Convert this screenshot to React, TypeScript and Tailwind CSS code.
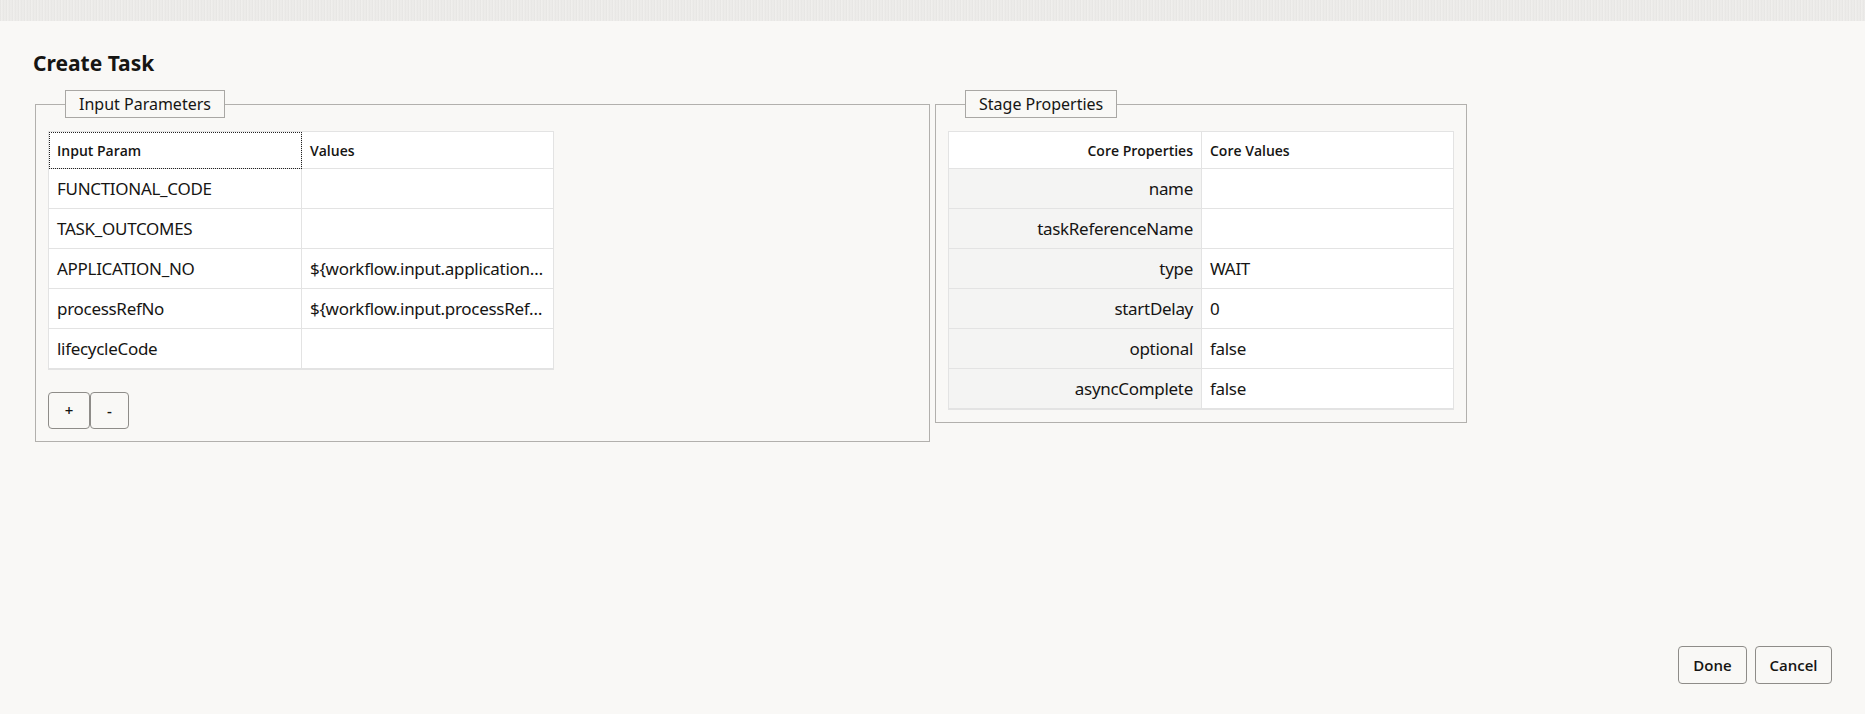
const inputParams = [
  { name: 'FUNCTIONAL_CODE', value: '' },
  { name: 'TASK_OUTCOMES', value: '' },
  { name: 'APPLICATION_NO', value: '${workflow.input.application…' },
  { name: 'processRefNo', value: '${workflow.input.processRef…' },
  { name: 'lifecycleCode', value: '' },
];

const coreProps = [
  { name: 'name', value: '' },
  { name: 'taskReferenceName', value: '' },
  { name: 'type', value: 'WAIT' },
  { name: 'startDelay', value: '0' },
  { name: 'optional', value: 'false' },
  { name: 'asyncComplete', value: 'false' },
];

const App = () => {
  return (
    <div className="w-full h-[714px] bg-[#f9f8f6] flex flex-col text-[#161513] font-['Noto_Sans',sans-serif]">
      {/* textured header strip */}
      <div className="h-[21px] bg-[#ebeae8] bg-[repeating-linear-gradient(90deg,#e4e3e1_0px,#f3f2f0_2px,#e6e5e3_3px,#efeeec_5px,#e9e8e6_6px)]" />

      <h1 className="pl-[33px] pt-[28px] text-[21px] leading-[28px] font-bold">Create Task</h1>

      <div className="flex items-start gap-[5px] pl-[35px] mt-[13px]">
        {/* Input Parameters */}
        <fieldset className="w-[895px] border border-[#b2b0ad] px-[12px] pt-[13px] pb-[12px]">
          <legend className="ml-[17px] border border-[#a9a7a4] px-[13px] text-[16px] leading-[26px]">
            Input Parameters
          </legend>
          <table className="table-fixed border-collapse w-[505px] bg-white border border-[#e3e3e3] border-b-2">
            <colgroup>
              <col className="w-[253px]" />
              <col className="w-[252px]" />
            </colgroup>
            <thead>
              <tr className="h-[37px]">
                <th className="text-left text-[14px] font-['Open_Sans',sans-serif] font-semibold px-[8px] border border-[#e3e3e3] outline-1 outline-dotted outline-[#222] -outline-offset-1">
                  Input Param
                </th>
                <th className="text-left text-[14px] font-['Open_Sans',sans-serif] font-semibold px-[8px] border border-[#e3e3e3]">
                  Values
                </th>
              </tr>
            </thead>
            <tbody>
              {inputParams.map((p) => (
                <tr key={p.name} className="h-[40px] text-[17px] tracking-[-0.3px]">
                  <td className="px-[8px] border border-[#e3e3e3] whitespace-nowrap">{p.name}</td>
                  <td className="px-[8px] border border-[#e3e3e3] whitespace-nowrap">{p.value}</td>
                </tr>
              ))}
            </tbody>
          </table>
          <div className="flex mt-[22px]">
            <button className="w-[42px] h-[37px] border border-[#8e8c89] rounded-[4px] text-[15px] font-['Open_Sans',sans-serif] font-semibold">+</button>
            <button className="w-[39px] h-[37px] border border-[#8e8c89] rounded-[4px] text-[15px] font-['Open_Sans',sans-serif] font-semibold">-</button>
          </div>
        </fieldset>

        {/* Stage Properties */}
        <fieldset className="w-[532px] border border-[#b2b0ad] px-[12px] pt-[13px] pb-[12px]">
          <legend className="ml-[17px] border border-[#a9a7a4] px-[13px] text-[16px] leading-[26px]">
            Stage Properties
          </legend>
          <table className="table-fixed border-collapse w-[505px] bg-white border border-[#e3e3e3] border-b-2">
            <colgroup>
              <col className="w-[253px]" />
              <col className="w-[252px]" />
            </colgroup>
            <thead>
              <tr className="h-[37px]">
                <th className="text-right text-[14px] font-['Open_Sans',sans-serif] font-semibold px-[8px] border border-[#e3e3e3]">
                  Core Properties
                </th>
                <th className="text-left text-[14px] font-['Open_Sans',sans-serif] font-semibold px-[8px] border border-[#e3e3e3]">
                  Core Values
                </th>
              </tr>
            </thead>
            <tbody>
              {coreProps.map((p) => (
                <tr key={p.name} className="h-[40px] text-[17px] tracking-[-0.3px]">
                  <td className="text-right px-[8px] bg-[#f4f4f3] border border-[#e3e3e3] whitespace-nowrap">{p.name}</td>
                  <td className="px-[8px] border border-[#e3e3e3] whitespace-nowrap">{p.value}</td>
                </tr>
              ))}
            </tbody>
          </table>
        </fieldset>
      </div>

      <div className="mt-auto flex justify-end gap-[8px] pr-[33px] pb-[30px] font-['Open_Sans',sans-serif]">
        <button className="w-[69px] h-[38px] border border-[#8e8c89] rounded-[4px] text-[15px] font-semibold">Done</button>
        <button className="w-[77px] h-[38px] border border-[#8e8c89] rounded-[4px] text-[15px] font-semibold">Cancel</button>
      </div>
    </div>
  );
};

export default App;
